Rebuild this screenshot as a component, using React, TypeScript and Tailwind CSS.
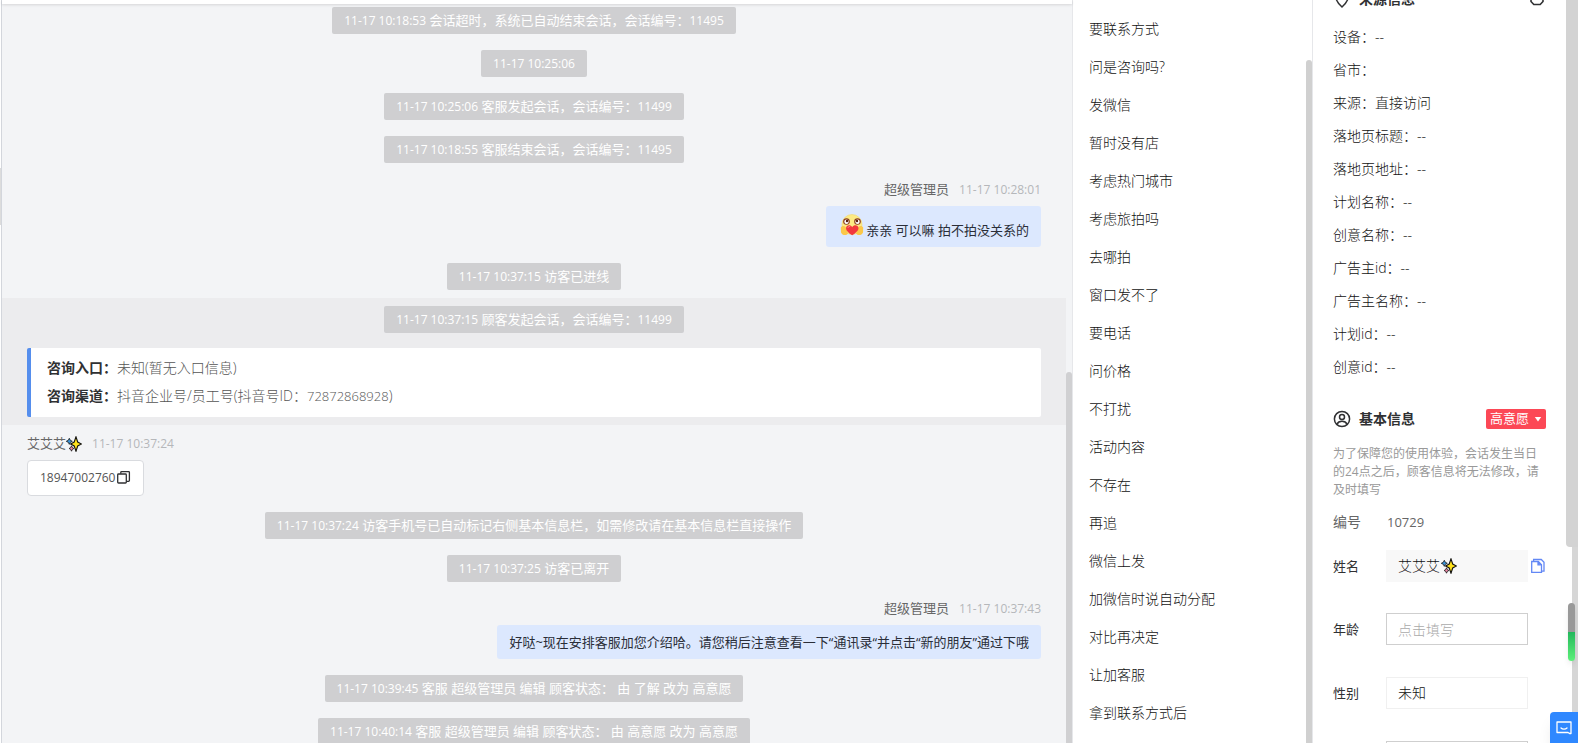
import type { ReactNode } from "react";

const quickReplies = [
  "要联系方式",
  "问是咨询吗?",
  "发微信",
  "暂时没有店",
  "考虑热门城市",
  "考虑旅拍吗",
  "去哪拍",
  "窗口发不了",
  "要电话",
  "问价格",
  "不打扰",
  "活动内容",
  "不存在",
  "再追",
  "微信上发",
  "加微信时说自动分配",
  "对比再决定",
  "让加客服",
  "拿到联系方式后",
];

const sourceInfo = [
  { label: "设备", value: "--" },
  { label: "省市", value: "" },
  { label: "来源", value: "直接访问" },
  { label: "落地页标题", value: "--" },
  { label: "落地页地址", value: "--" },
  { label: "计划名称", value: "--" },
  { label: "创意名称", value: "--" },
  { label: "广告主id", value: "--" },
  { label: "广告主名称", value: "--" },
  { label: "计划id", value: "--" },
  { label: "创意id", value: "--" },
];

const Sparkles = () => (
  <svg className="h-4 w-4 shrink-0" viewBox="0 0 16 16">
    <path d="M10 .8 11.7 6 15.5 8 11.7 10 10 15.2 8.2 10 4.6 8 8.2 6Z" fill="#ffe11a" stroke="#111" strokeWidth="1.1" />
    <path d="m3.3 2.3 1 2 2 1-2 1-1 2-1-2-2-1 2-1Z" fill="#3a96dd" stroke="#111" strokeWidth=".8" />
    <path d="m5.5 9.8.8 1.8 1.6.9-1.6.9-.8 1.8-.8-1.8-1.6-.9 1.6-.9Z" fill="#f08ba8" stroke="#111" strokeWidth=".8" />
  </svg>
);

const HugFace = () => (
  <svg className="mx-0.5 mb-[3px] h-6 w-6 shrink-0" viewBox="0 0 24 24">
    <circle cx="12" cy="11.500" r="10" fill="#fdea85" stroke="#f3d768" strokeWidth=".6" />
    <circle cx="6.500" cy="8.500" r="3.300" fill="#8a3b1c" />
    <circle cx="17.500" cy="8.500" r="3.300" fill="#8a3b1c" />
    <circle cx="6.500" cy="8.800" r="2.200" fill="#fff" />
    <circle cx="17.500" cy="8.800" r="2.200" fill="#fff" />
    <circle cx="7" cy="8" r="1.200" fill="#5b1d0c" />
    <circle cx="17" cy="8" r="1.200" fill="#5b1d0c" />
    <path d="M.8 14.500c2-2.500 5-1.500 5.700 1.500L8 20.500c-1.500 2.500-6 2-7-1z" fill="#fbc84a" />
    <path d="M23.200 14.500c-2-2.500-5-1.500-5.700 1.500L16 20.500c1.500 2.500 6 2 7-1z" fill="#fbc84a" />
    <path d="M12.200 22.300C8 19.500 6 17.500 6 15.200c0-3.200 4.500-4 6.200-1 1.700-3 6.300-2.200 6.300 1 0 2.300-2.300 4.300-6.300 7.100z" fill="#f2383d" />
    <path d="M8 14.600c.4-1 1.300-1.300 2.200-1" stroke="#ff9a9a" fill="none" />
  </svg>
);

type NoticeProps = { time: string; session?: string; children?: ReactNode };

const Notice = ({ time, session, children }: NoticeProps) => (
  <div className="flex justify-center py-2">
    <div className="h-[27px] whitespace-pre rounded-xs bg-[#cfcfd1] px-3 text-[13px] leading-[27px] text-white">
      <span className="text-xs">{time}</span>
      {children && <> {children}</>}
      {session && <span className="text-xs">{session}</span>}
    </div>
  </div>
);

const AgentMessage = ({ time, children }: { time: string; children: ReactNode }) => (
  <div className="flex flex-col items-end px-[25px] py-2">
    <div className="mb-[5px] flex h-[22px] items-center gap-2.5 text-[13px] text-[#666]">
      超级管理员
      <span className="text-xs text-[#b5b7ba]">{time}</span>
    </div>
    <div className="flex items-end rounded-[3px] bg-[#dce8fe] px-3 py-[7px] text-[13px] leading-5 text-[#2a2e38]">
      {children}
    </div>
  </div>
);

const Chat = () => (
  <main className="flex min-w-0 flex-1 flex-col border-l border-[#d3d6dc] bg-[#f3f4f6]">
    <div className="z-10 h-1 shrink-0 bg-white shadow-[0_1px_3px_rgba(0,0,0,0.12)]" />
    <div className="flex min-h-0 flex-1">
      <div className="-mt-[5px] min-w-0 flex-1">
        <Notice time="11-17 10:18:53" session="11495">会话超时，系统已自动结束会话，会话编号：</Notice>
        <Notice time="11-17 10:25:06" />
        <Notice time="11-17 10:25:06" session="11499">客服发起会话，会话编号：</Notice>
        <Notice time="11-17 10:18:55" session="11495">客服结束会话，会话编号：</Notice>
        <AgentMessage time="11-17 10:28:01">
          <HugFace />
          <span>亲亲 可以嘛 拍不拍没关系的</span>
        </AgentMessage>
        <Notice time="11-17 10:37:15">访客已进线</Notice>

        {/* Current session */}
        <section className="bg-[#ececee]">
          <Notice time="11-17 10:37:15" session="11499">顾客发起会话，会话编号：</Notice>
          <div className="px-[25px] pt-[7px] pb-2">
            <div className="rounded-xs border-l-4 border-[#558eed] bg-white px-4 pt-1.5 pb-[7px] text-sm leading-7 font-light text-[#555]">
              <p>
                <b className="font-bold text-[#303133]">咨询入口：</b>未知(暂无入口信息)
              </p>
              <p>
                <b className="font-bold text-[#303133]">咨询渠道：</b>抖音企业号/员工号(抖音号ID：
                <span className="text-[13px]">72872868928</span>)
              </p>
            </div>
          </div>
        </section>

        <div className="flex flex-col items-start px-[25px] py-2">
          <div className="mb-[5px] flex h-[22px] items-center text-[13px] text-[#666]">
            艾艾艾
            <Sparkles />
            <span className="ml-2.5 text-xs text-[#b5b7ba]">11-17 10:37:24</span>
          </div>
          <div className="flex h-9 items-center rounded border border-[#d9dbdf] bg-white px-3 text-xs text-[#555]">
            18947002760
            <button aria-label="复制">
              <svg className="h-4 w-4" viewBox="0 0 16 16" fill="none" stroke="#303133" strokeWidth="1.300">
                <rect x="2.700" y="4" width="8.600" height="9" rx=".8" />
                <path d="M5.800 3.800V2.400a.8.800 0 0 1 .8-.8h7a.8.800 0 0 1 .8.800v8.200a.8.800 0 0 1-.8.800h-2.200" />
              </svg>
            </button>
          </div>
        </div>

        <Notice time="11-17 10:37:24">访客手机号已自动标记右侧基本信息栏，如需修改请在基本信息栏直接操作</Notice>
        <Notice time="11-17 10:37:25">访客已离开</Notice>
        <AgentMessage time="11-17 10:37:43">
          好哒~现在安排客服加您介绍哈。请您稍后注意查看一下“通讯录“并点击“新的朋友”通过下哦
        </AgentMessage>
        <Notice time="11-17 10:39:45">客服 超级管理员 编辑 顾客状态： 由 了解 改为 高意愿</Notice>
        <Notice time="11-17 10:40:14">客服 超级管理员 编辑 顾客状态： 由 高意愿 改为 高意愿</Notice>
      </div>
      <div className="flex w-1.5 flex-col pt-[368px]">
        <div className="flex-1 rounded-t-full bg-[#d0d0d2]" />
      </div>
    </div>
  </main>
);

const QuickReplies = () => (
  <aside className="flex w-[241px] shrink-0 border-x border-[#e6e7ea] bg-white">
    <ul className="flex-1 pt-2.5 pl-4 text-sm leading-[38px] font-light text-[#111]">
      {quickReplies.map((reply) => (
        <li key={reply}>{reply}</li>
      ))}
    </ul>
    <div className="flex w-1.5 flex-col pt-[60px]">
      <div className="flex-1 rounded-t-full bg-[#d0d0d0]" />
    </div>
  </aside>
);

const CustomerInfo = () => (
  <aside className="flex w-[265px] shrink-0 bg-white text-[#303133]">
    <div className="flex-1 px-5">
      {/* Source info, scrolled partly out of view */}
      <div className="-mt-3 flex h-[22px] items-center text-sm font-bold">
        <svg className="h-[18px] w-[18px]" viewBox="0 0 18 18" fill="none" stroke="#303133" strokeWidth="1.500">
          <path d="M9 17S3 11.500 3 7.500a6 6 0 0 1 12 0C15 11.500 9 17 9 17z" />
        </svg>
        <h2 className="ml-2 flex-1">来源信息</h2>
        <button aria-label="设置">
          <svg className="mr-px h-4 w-4" viewBox="0 0 16 16" fill="none" stroke="#303133" strokeWidth="1.600">
            <path d="M4.800 1.500h6.400l2.800 3v6l-2.800 3H4.800l-2.800-3v-6z" strokeLinejoin="round" />
          </svg>
        </button>
      </div>
      <div className="pt-2.5 text-sm leading-[33px] font-light text-[#111]">
        {sourceInfo.map((item) => (
          <p key={item.label}>
            {item.label}：{item.value}
          </p>
        ))}
      </div>

      <div className="mt-[26px] flex h-5 items-center">
        <svg className="h-[18px] w-[18px]" viewBox="0 0 18 18" fill="none" stroke="#303133" strokeWidth="1.500">
          <circle cx="9" cy="9" r="7.600" />
          <circle cx="9" cy="7" r="2.500" />
          <path d="M3.800 14.300c1-2 2.800-3 5.200-3s4.200 1 5.200 3" />
        </svg>
        <h2 className="ml-2 flex-1 text-sm font-bold">基本信息</h2>
        <button className="flex h-5 items-center gap-[5px] rounded-xs bg-[#fc4856] px-1 text-[13px] text-white">
          高意愿
          <svg className="h-2 w-2" viewBox="0 0 8 8" fill="#fff">
            <path d="M.8 2h6.400L4 6.500z" />
          </svg>
        </button>
      </div>
      <p className="mt-4 text-xs leading-[18px] text-[#999]">
        为了保障您的使用体验，会话发生当日的24点之后，顾客信息将无法修改，请及时填写
      </p>

      <form className="mt-[13px] text-sm">
        <div className="flex h-5 items-center text-[#666]">
          <span className="w-[54px]">编号</span>
          <span className="text-[13px]">10729</span>
        </div>
        <div className="mt-[18px] flex h-8 items-center">
          <label htmlFor="name" className="w-[53px] text-[13px]">姓名</label>
          <div className="flex h-full w-[142px] items-center bg-[#f8f8f8] pl-3">
            <input id="name" className="w-[43px] bg-transparent font-light text-[#111] outline-none" defaultValue="艾艾艾" />
            <Sparkles />
          </div>
          <button type="button" aria-label="复制姓名" className="ml-0.5">
            <svg className="h-4 w-4" viewBox="0 0 16 16" fill="none" stroke="#6388f5" strokeWidth="1.300">
              <path d="M1.700 3.500h6.600l3.200 3.200v7.600H1.700z" />
              <path d="M8 3.500v3.300h3.500" fill="#6388f5" />
              <path d="M3.600 3.300V1.500h7.700l2.700 2.700v9h-2.300" />
            </svg>
          </button>
        </div>
        <div className="mt-[31px] flex h-8 items-center">
          <label htmlFor="age" className="w-[53px] text-[13px]">年龄</label>
          <input id="age" placeholder="点击填写" className="h-full w-[142px] border border-[#cfcfcf] pl-[11px] outline-none placeholder:font-light placeholder:text-[#aaa]" />
        </div>
        <div className="mt-8 flex h-8 items-center">
          <label htmlFor="gender" className="w-[53px] text-[13px]">性别</label>
          <select id="gender" className="h-full w-[142px] appearance-none border border-[#f0f0f0] pl-[11px] font-light text-[#111] outline-none">
            <option>未知</option>
          </select>
        </div>
        <div className="mt-8 flex h-8 items-center pl-[53px]">
          <input aria-label="电话" className="h-full w-[142px] border border-[#cfcfcf] pl-[11px] outline-none" />
        </div>
      </form>
    </div>
    <div className="flex w-3 flex-col items-end">
      <div className="h-[547px] w-3 shrink-0 rounded-bl bg-[#d3d3d3]" />
      <div className="w-1.5 flex-1 bg-[#d6d6d6]" />
    </div>
  </aside>
);

export default function App() {
  return (
    <div className="flex h-screen overflow-hidden bg-white font-['Open_Sans','Noto_Sans_CJK_SC',sans-serif]">
      <div className="w-px shrink-0 pt-[168px]">
        <div className="h-[57px] bg-[#dcdcdc]" />
      </div>
      <Chat />
      <QuickReplies />
      <CustomerInfo />

      {/* Floating widgets */}
      <div className="fixed right-[3px] bottom-[82px] flex h-[58px] w-[7px] flex-col overflow-hidden rounded-full shadow-md">
        <div className="flex-1 bg-[#999]" />
        <div className="flex-1 bg-gradient-to-b from-[#22b85c] to-[#5cf07a]" />
      </div>
      <button aria-label="客服" className="fixed right-0 bottom-0 flex h-[31px] w-7 items-center justify-center rounded-tl bg-[#2f88ff] shadow-lg">
        <svg className="h-4 w-4" viewBox="0 0 16 16" fill="none" stroke="#fff" strokeWidth="1.300">
          <path d="M1 2h14v11.500h-1.500l-1.500-1H1z" strokeLinejoin="round" />
          <path d="M5 8c1.600 1.600 4.400 1.600 6 0" strokeLinecap="round" />
        </svg>
      </button>
    </div>
  );
}
